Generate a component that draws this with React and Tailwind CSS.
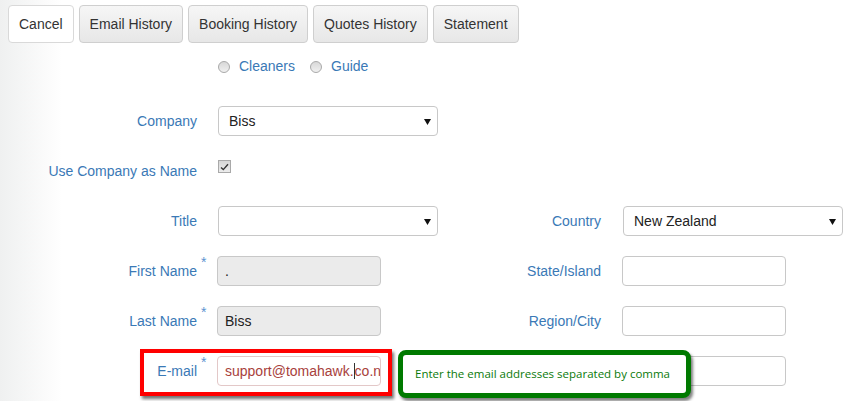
import React from 'react';

const font = { fontFamily: '"Liberation Sans", Arial, sans-serif' };

const Btn = ({ children, white }) => (
  <button
    className={`h-[38px] px-[10px] rounded-[4px] border text-[14px] text-[#333] ${
      white
        ? 'bg-white border-[#d9d9d9]'
        : 'border-[#cfcfcf] bg-[linear-gradient(to_bottom,#f6f6f6,#e7e7e7)]'
    }`}
  >
    {children}
  </button>
);

const Caret = () => (
  <svg width="7" height="6" viewBox="0 0 7 6" className="absolute right-[6px] top-[12px]">
    <path d="M0 0 H7 L3.5 6 Z" fill="#111" />
  </svg>
);

const Select = ({ value }) => (
  <div className="relative ml-[1px] w-[220px] h-[30px] rounded-[4px] border border-[#c8c8c8] bg-white pl-[10px] leading-[28px] text-[14px] text-[#222]">
    {value}
    <Caret />
  </div>
);

const Input = ({ value, grey }) => (
  <div
    className={`w-[164px] h-[30px] rounded-[4px] border border-[#c8c8c8] pl-[7px] leading-[28px] text-[14px] text-[#222] overflow-hidden whitespace-nowrap ${
      grey ? 'bg-[#ebebeb]' : 'bg-white'
    }`}
  >
    {value}
  </div>
);

const Label = ({ children, w, req }) => (
  <>
    <div className={`${w} shrink-0 text-right leading-[30px] text-[14px] text-[#3a79b6]`}>{children}</div>
    <div className={`${w === 'w-[197px]' ? 'w-[20px]' : 'w-[21px]'} shrink-0 relative`}>
      {req && <span className="absolute left-[4px] top-[-4px] text-[14px] text-[#5b93cf]">*</span>}
    </div>
  </>
);

const Row = ({ label, req, control, rlabel, rcontrol, children }) => (
  <div className="relative flex h-[30px]">
    <div className="flex w-[440px] shrink-0">
      <Label w="w-[197px]" req={req}>{label}</Label>
      {control}
    </div>
    {rlabel && (
      <div className="flex">
        <Label w="w-[161px]">{rlabel}</Label>
        {rcontrol}
      </div>
    )}
    {children}
  </div>
);

const Radio = () => (
  <span className="inline-block w-[12px] h-[12px] rounded-full border border-[#a9a9a9] bg-[linear-gradient(to_bottom,#d8d8d8,#f0f0f0)] mt-[5px]" />
);

export default function App() {
  return (
    <div
      style={font}
      className="w-[854px] h-[401px] overflow-hidden flex flex-col bg-[linear-gradient(to_right,#eff0f0,#ffffff_62px)]"
    >
      <div className="flex gap-[5px] pl-[8px] pt-[5px]">
        <Btn white>Cancel</Btn>
        <Btn>Email History</Btn>
        <Btn>Booking History</Btn>
        <Btn>Quotes History</Btn>
        <Btn>Statement</Btn>
      </div>

      <div className="flex h-[20px] mt-[13px] pl-[218px] text-[14px] leading-[20px] text-[#3a79b6]">
        <Radio />
        <span className="ml-[9px]">Cleaners</span>
        <span className="ml-[15px] flex">
          <Radio />
        </span>
        <span className="ml-[9px]">Guide</span>
      </div>

      <div className="flex flex-col gap-[20px] mt-[30px]">
        <Row label="Company" control={<Select value="Biss" />} />
        <Row
          label="Use Company as Name"
          control={
            <div className="ml-[1px] mt-[4px] w-[13px] h-[13px] border border-[#a9a9a9] bg-[linear-gradient(to_bottom,#d6d6d6,#ececec)] flex items-center justify-center">
              <svg width="9" height="8" viewBox="0 0 9 8">
                <path d="M1 4.5 L3.3 6.6 L8 1.2" fill="none" stroke="#333" strokeWidth="1.4" />
              </svg>
            </div>
          }
        />
        <Row
          label="Title"
          control={<Select value="" />}
          rlabel="Country"
          rcontrol={<Select value="New Zealand" />}
        />
        <Row
          label="First Name"
          req
          control={<Input value="." grey />}
          rlabel="State/Island"
          rcontrol={<Input value="" />}
        />
        <Row
          label="Last Name"
          req
          control={<Input value="Biss" grey />}
          rlabel="Region/City"
          rcontrol={<Input value="" />}
        />
        <Row
          label="E-mail"
          req
          control={
            <div className="w-[164px] h-[30px] rounded-[4px] border border-[#e3c8c8] bg-white pl-[7px] leading-[28px] text-[14px] text-[#a8413c] overflow-hidden whitespace-nowrap">
              support@tomahawk.<span className="border-l border-[#333]">co.nz</span>
            </div>
          }
          rlabel=" "
          rcontrol={<Input value="" />}
        >
          <div className="absolute left-[140px] top-[-7px] w-[252px] h-[47px] border-[4px] border-[#ff0000] shadow-[2px_3px_3px_rgba(0,0,0,0.55)]" />
          <div
            className="absolute left-[398px] top-[-6px] w-[293px] h-[48px] rounded-[8px] border-[5px] border-[#007a00] bg-white shadow-[2px_3px_3px_rgba(0,0,0,0.5)] pl-[12px] leading-[38px] text-[11.5px] text-[#0a7a0a]"
            style={{ fontFamily: '"Open Sans", "DejaVu Sans", sans-serif' }}
          >
            Enter the email addresses separated by comma
          </div>
        </Row>
      </div>
    </div>
  );
}
